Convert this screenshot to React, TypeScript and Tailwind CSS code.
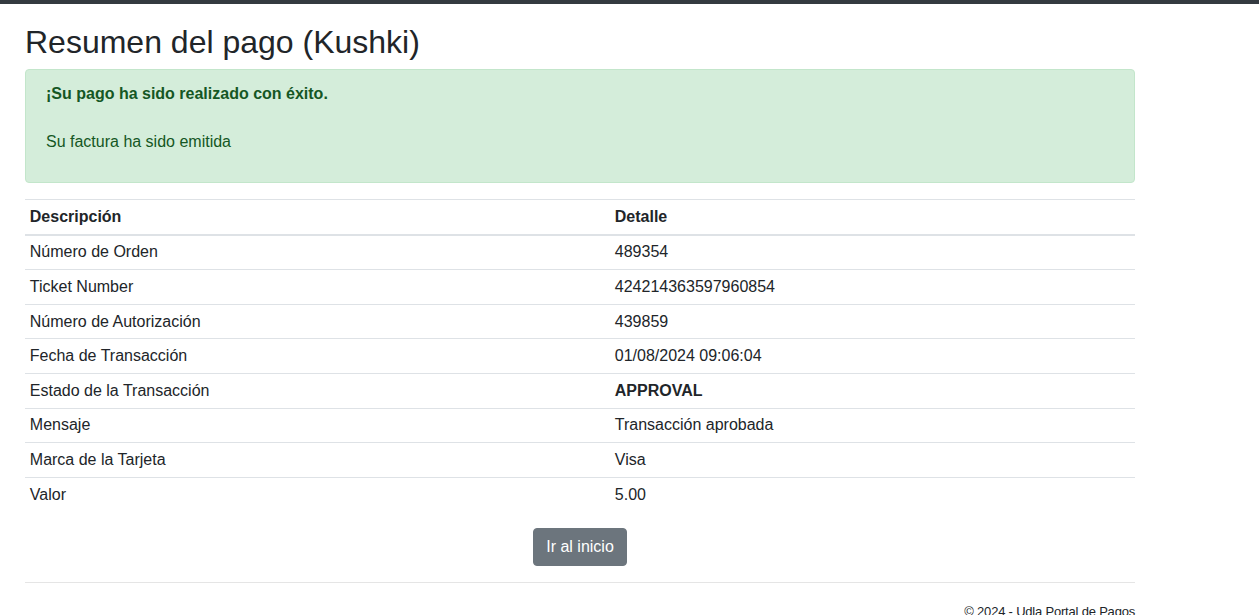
const rows = [
  { label: "Número de Orden", value: "489354" },
  { label: "Ticket Number", value: "424214363597960854" },
  { label: "Número de Autorización", value: "439859" },
  { label: "Fecha de Transacción", value: "01/08/2024 09:06:04" },
  { label: "Estado de la Transacción", value: "APPROVAL", bold: true },
  { label: "Mensaje", value: "Transacción aprobada" },
  { label: "Marca de la Tarjeta", value: "Visa" },
  { label: "Valor", value: "5.00" },
];

const App = () => {
  return (
    <div
      className="min-h-screen bg-white text-[#212529] text-base leading-6"
      style={{ fontFamily: "'Liberation Sans', Arial, sans-serif" }}
    >
      {/* barra superior */}
      <div className="h-[4px] w-full bg-[#343a40]" />

      <div className="ml-[25px] w-[1110px]">
        <h2 className="mt-[18.6px] mb-2 text-[32px] leading-[38.4px] font-normal">
          Resumen del pago (Kushki)
        </h2>

        <div className="mb-4 rounded border border-[#c3e6cb] bg-[#d4edda] px-5 pt-3 pb-3 text-[#155724]">
          <p className="mb-4">
            <strong>¡Su pago ha sido realizado con éxito.</strong>
            <br />
            <br />
            Su factura ha sido emitida
          </p>
        </div>

        <table className="mb-[17px] w-full border-collapse text-left">
          <thead>
            <tr>
              <th className="w-[585px] border-t border-b-2 border-[#dee2e6] px-[4.8px] py-[4.8px] font-bold">
                Descripción
              </th>
              <th className="border-t border-b-2 border-[#dee2e6] px-[4.8px] py-[4.8px] font-bold">
                Detalle
              </th>
            </tr>
          </thead>
          <tbody>
            {rows.map((row, i) => (
              <tr key={row.label}>
                <td
                  className={`px-[4.8px] py-[4.8px] border-[#dee2e6] ${i === 0 ? "" : "border-t"}`}
                >
                  {row.label}
                </td>
                <td
                  className={`px-[4.8px] py-[4.8px] border-[#dee2e6] ${i === 0 ? "" : "border-t"} ${row.bold ? "font-bold" : ""}`}
                >
                  {row.value}
                </td>
              </tr>
            ))}
          </tbody>
        </table>

        <div className="flex justify-center">
          <button className="rounded border border-[#6c757d] bg-[#6c757d] px-3 py-1.5 text-white">
            Ir al inicio
          </button>
        </div>

        <hr className="mt-4 mb-[19px] border-0 border-t border-black/10" />

        <footer className="text-right text-[13px] leading-5 tracking-[-0.2px]">
          © 2024 - Udla Portal de Pagos
        </footer>
      </div>
    </div>
  );
};

export default App;
